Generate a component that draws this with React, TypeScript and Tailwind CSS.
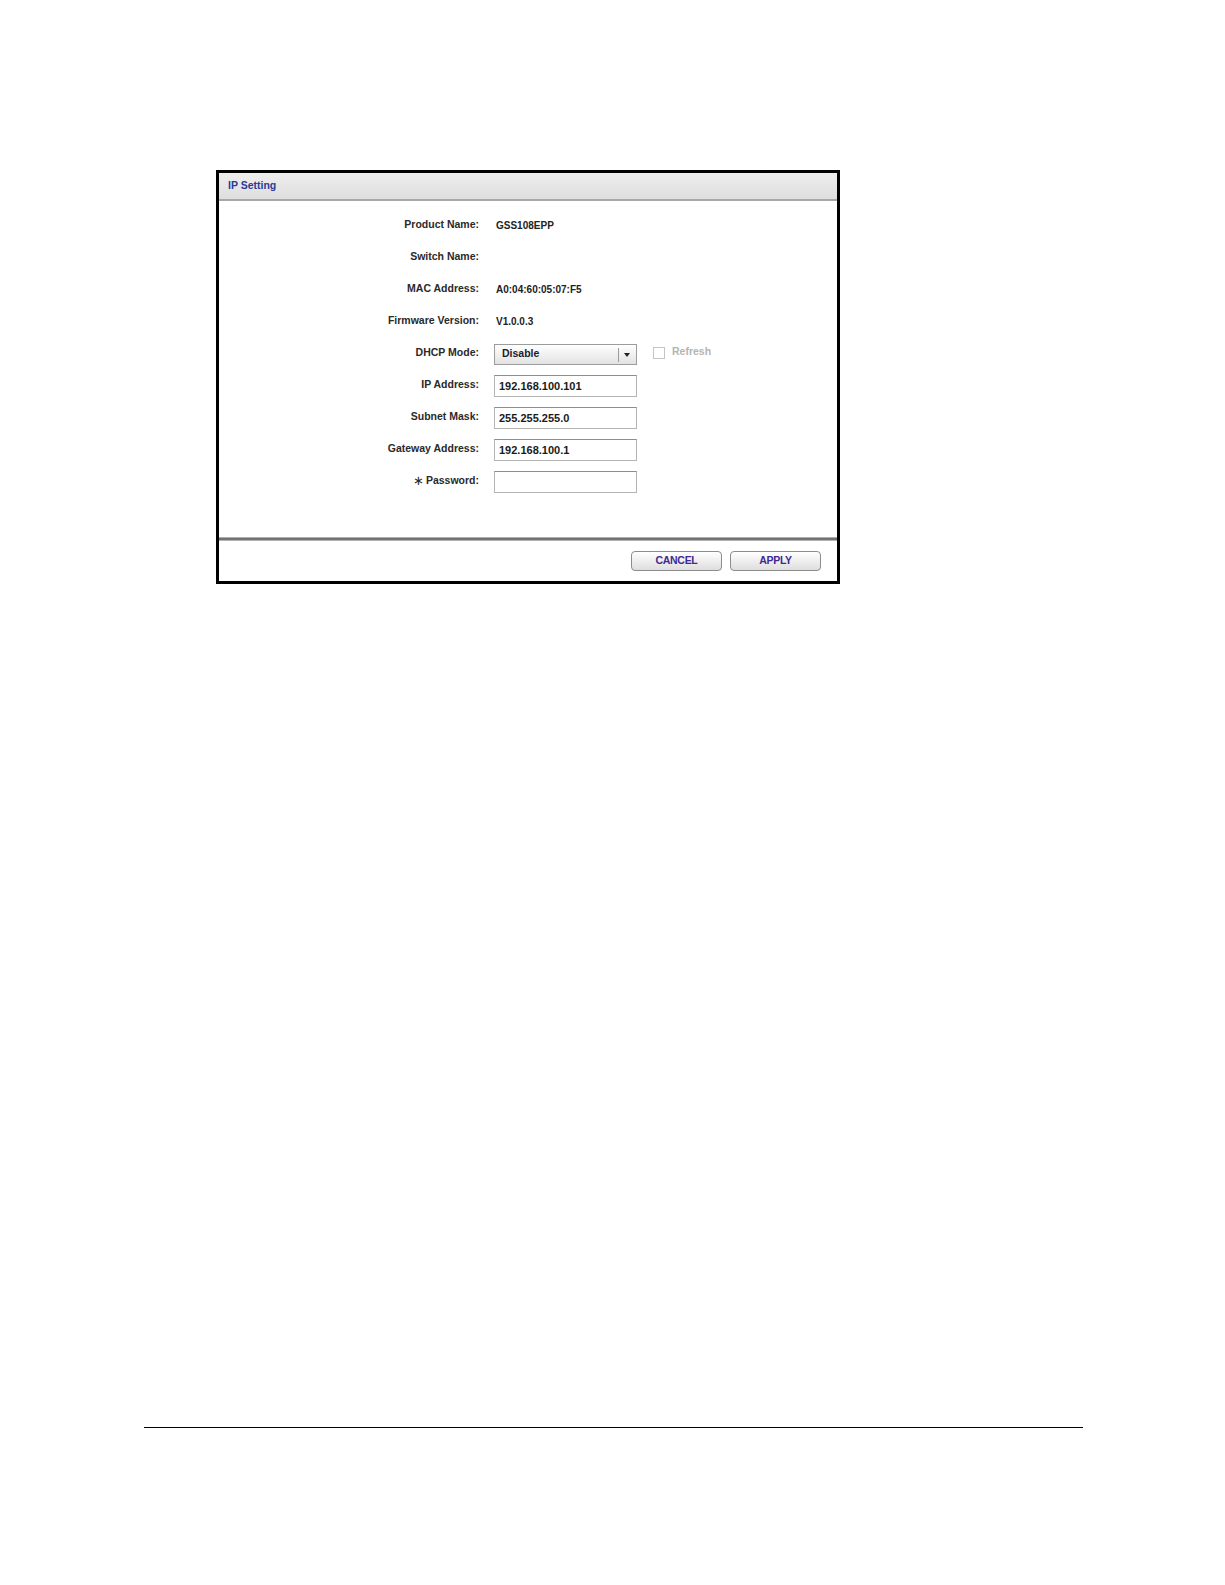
import React from "react";

type Row =
  | { label: string; kind: "text"; value: string }
  | { label: string; kind: "select"; value: string }
  | { label: string; kind: "input"; value: string; required?: boolean };

const rows: Row[] = [
  { label: "Product Name:", kind: "text", value: "GSS108EPP" },
  { label: "Switch Name:", kind: "text", value: "" },
  { label: "MAC Address:", kind: "text", value: "A0:04:60:05:07:F5" },
  { label: "Firmware Version:", kind: "text", value: "V1.0.0.3" },
  { label: "DHCP Mode:", kind: "select", value: "Disable" },
  { label: "IP Address:", kind: "input", value: "192.168.100.101" },
  { label: "Subnet Mask:", kind: "input", value: "255.255.255.0" },
  { label: "Gateway Address:", kind: "input", value: "192.168.100.1" },
  { label: "Password:", kind: "input", value: "", required: true },
];

function Control({ row }: { row: Row }) {
  if (row.kind === "text") {
    return (
      <span className="ml-[17px] text-[10px] font-bold text-[#222222]">
        {row.value}
      </span>
    );
  }
  if (row.kind === "select") {
    return (
      <div className="ml-[15px] flex items-center">
        <div className="relative mt-[2px] flex h-[21px] w-[143px] items-center border border-[#9c9c9c] bg-gradient-to-b from-[#ffffff] to-[#e2e2e2]">
          <span className="pl-[7px] text-[10.5px] font-bold text-[#1c1c2e]">
            {row.value}
          </span>
          <div className="absolute left-[123px] top-[3px] h-[14px] w-px bg-[#9a9a9a]" />
          <svg
            className="absolute left-[129px] top-[8px]"
            width="6"
            height="4"
            viewBox="0 0 6 4"
          >
            <path d="M0 0 L6 0 L3 4 Z" fill="#222" />
          </svg>
        </div>
        <div className="ml-[16px] h-[12px] w-[12px] border border-[#c4c4c4] bg-white" />
        <span className="ml-[7px] -mt-[3px] text-[10.5px] font-bold text-[#b4b4b4]">
          Refresh
        </span>
      </div>
    );
  }
  return (
    <div className="ml-[15px] mt-[2px] flex h-[22px] w-[143px] items-center border border-[#b4b4b4] border-t-[#8e8e8e] bg-white pl-[4px]">
      <span className="text-[11px] font-bold text-[#1a1a1a]">{row.value}</span>
    </div>
  );
}

export default function App() {
  return (
    <div className="min-h-[1585px] bg-white pt-[170px] font-['Liberation_Sans',Arial,sans-serif]">
      <div className="ml-[216px] flex h-[414px] w-[624px] flex-col border-[3px] border-black bg-white">
        <div className="flex h-[28px] items-center border-b-2 border-[#a8a8a8] bg-gradient-to-b from-[#eeeeee] to-[#dedede] pl-[9px]">
          <span className="text-[10.5px] font-bold text-[#2b3a95]">IP Setting</span>
        </div>

        <div className="flex-1 pt-[8px]">
          {rows.map((row) => (
            <div
              key={row.label}
              className="grid h-[32px] grid-cols-[260px_1fr] items-center"
            >
              <div className="text-right text-[10.5px] font-bold text-[#2a2a2a]">
                {row.kind === "input" && row.required ? (
                  <span className="mr-[2px] align-[-1px] text-[13px] font-normal">
                    ∗
                  </span>
                ) : null}
                {row.label}
              </div>
              <Control row={row} />
            </div>
          ))}
        </div>

        <div className="h-[4px] bg-gradient-to-b from-[#cfcfcf] via-[#555555] to-[#d6d6d6]" />

        <div className="flex h-[40px] items-center justify-end gap-[8px] pr-[16px]">
          {["CANCEL", "APPLY"].map((label) => (
            <button
              key={label}
              className="flex h-[20px] w-[91px] items-center justify-center rounded-[4px] border border-[#8c8c8c] bg-gradient-to-b from-[#ffffff] to-[#dedede] text-[10.5px] font-bold tracking-[-0.3px] text-[#3f2a93]"
            >
              {label}
            </button>
          ))}
        </div>
      </div>

      <div className="ml-[144px] mt-[843px] h-px w-[939px] bg-black" />
    </div>
  );
}
